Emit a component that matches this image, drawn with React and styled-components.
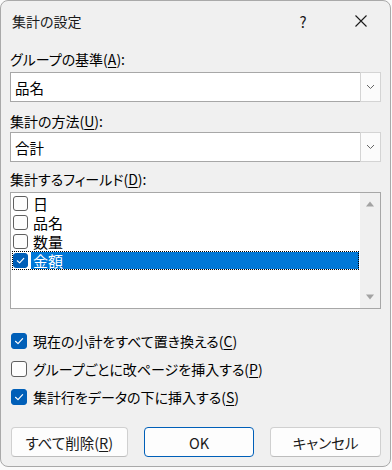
import React from 'react';
import styled, { createGlobalStyle } from 'styled-components';

const GlobalStyle = createGlobalStyle`
  html, body {
    margin: 0;
    padding: 0;
    background: #fafafa;
  }
  body {
    font-family: "Noto Sans CJK JP", "Noto Sans", sans-serif;
    font-feature-settings: "palt";
    color: #000;
  }
`;

const Dialog = styled.div`
  width: 391px;
  height: 467px;
  box-sizing: border-box;
  background: #f0f0f0;
  border: 1px solid #a9a9a9;
  border-radius: 8px;
  display: flex;
  flex-direction: column;
  overflow: hidden;
`;

const TitleBar = styled.div`
  height: 40px;
  display: flex;
  align-items: center;
  padding-left: 11px;
  font-size: 14px;
  color: #1a1a1a;
`;

const Title = styled.div`
  flex: 1;
`;

const TitleButton = styled.div`
  width: 58px;
  height: 40px;
  display: flex;
  align-items: center;
  justify-content: center;
  font-size: 15px;
  color: #1a1a1a;
`;

const Body = styled.div`
  display: flex;
  flex-direction: column;
  padding: 0 9px;
`;

const Label = styled.div`
  height: 20px;
  line-height: 20px;
  font-size: 14px;
  margin-top: ${(p) => p.$top}px;
`;

const Key = styled.span`
  text-decoration: underline;
  text-underline-offset: 2px;
`;

const Select = styled.div`
  margin-top: ${(p) => p.$top}px;
  width: 371px;
  height: 30px;
  box-sizing: border-box;
  background: #fff;
  border: 1px solid #a7a7a7;
  display: flex;
  align-items: center;
`;

const SelectText = styled.div`
  flex: 1;
  padding-left: 4px;
  font-size: 14.5px;
`;

const DropButton = styled.div`
  width: 21px;
  height: 30px;
  box-sizing: border-box;
  margin-right: -1px;
  border: 1px solid #d4d4d4;
  background: #fbfbfb;
  display: flex;
  align-items: center;
  justify-content: center;
`;

const ListBox = styled.div`
  margin-top: 3px;
  width: 371px;
  height: 117px;
  box-sizing: border-box;
  background: #fff;
  border: 1px solid #a7a7a7;
  display: flex;
`;

const Items = styled.div`
  flex: 1;
  padding: 1px 0 0 1px;
  display: flex;
  flex-direction: column;
`;

const Item = styled.div`
  height: 19px;
  width: 347px;
  box-sizing: border-box;
  display: flex;
  align-items: center;
  padding-left: 1px;
  outline: ${(p) => (p.$selected ? '1px dotted #000' : 'none')};
  outline-offset: -1px;
`;

const ItemText = styled.div`
  margin-left: 3px;
  padding-left: 2px;
  flex: ${(p) => (p.$selected ? 1 : 'none')};
  height: 17px;
  line-height: 17px;
  font-size: 15px;
  background: ${(p) => (p.$selected ? '#0078d7' : 'transparent')};
  color: ${(p) => (p.$selected ? '#fff' : '#000')};
`;

const Box = styled.div`
  width: ${(p) => p.$size}px;
  height: ${(p) => p.$size}px;
  box-sizing: border-box;
  border-radius: 3px;
  flex: none;
  display: flex;
  align-items: center;
  justify-content: center;
  background: ${(p) => (p.$checked ? '#005fb8' : '#fdfdfd')};
  border: 1px solid ${(p) => (p.$checked ? '#005fb8' : '#5f5f5f')};
`;

const ScrollBar = styled.div`
  width: 20px;
  background: #f0f0f0;
  display: flex;
  flex-direction: column;
  justify-content: space-between;
  align-items: center;
  padding: 8px 0 8px;
`;

const Options = styled.div`
  margin-top: 18px;
  display: flex;
  flex-direction: column;
`;

const OptionRow = styled.div`
  height: 28px;
  display: flex;
  align-items: center;
  padding-left: 1px;
  gap: 6px;
  font-size: 14px;
`;

const Buttons = styled.div`
  margin-top: 16px;
  display: flex;
  gap: 16px;
  padding-left: 1px;
`;

const Button = styled.div`
  width: ${(p) => p.$w}px;
  height: 30px;
  box-sizing: border-box;
  background: #fdfdfd;
  border: 1px solid ${(p) => (p.$primary ? '#005fb8' : '#d0d0d0')};
  border-bottom-color: ${(p) => (p.$primary ? '#005fb8' : '#bdbdbd')};
  border-radius: 4px;
  display: flex;
  align-items: center;
  justify-content: center;
  font-size: 14.5px;
  color: #1a1a1a;
`;

const Check = ({ size }) => (
  <svg width={size - 4} height={size - 4} viewBox="0 0 12 12">
    <polyline points="2.5,6.3 5,8.6 9.6,3.6" fill="none" stroke="#fff" strokeWidth="1.2" strokeLinecap="round" strokeLinejoin="round" />
  </svg>
);

const CheckBox = ({ checked, size }) => (
  <Box $checked={checked} $size={size}>{checked && <Check size={size} />}</Box>
);

const Chevron = () => (
  <svg width="9" height="6" viewBox="0 0 9 6">
    <polyline points="1,1 4.5,4.5 8,1" fill="none" stroke="#666" strokeWidth="1" />
  </svg>
);

const Arrow = ({ down }) => (
  <svg width="10" height="6" viewBox="0 0 10 6">
    <polygon points={down ? '1,0.5 9,0.5 5,5.5' : '1,5.5 9,5.5 5,0.5'} fill="#a3a3a3" />
  </svg>
);

const fields = [
  { name: '日', checked: false },
  { name: '品名', checked: false },
  { name: '数量', checked: false },
  { name: '金額', checked: true },
];

const options = [
  { pre: '現在の小計をすべて置き換える(', key: 'C', checked: true },
  { pre: 'グループごとに改ページを挿入する(', key: 'P', checked: false },
  { pre: '集計行をデータの下に挿入する(', key: 'S', checked: true },
];

export default function App() {
  return (
    <>
      <GlobalStyle />
      <Dialog>
        <TitleBar>
          <Title>集計の設定</Title>
          <TitleButton>?</TitleButton>
          <TitleButton>
            <svg width="12" height="12" viewBox="0 0 12 12">
              <path d="M0.5 0.5 L11.5 11.5 M11.5 0.5 L0.5 11.5" stroke="#1a1a1a" strokeWidth="1.1" />
            </svg>
          </TitleButton>
        </TitleBar>
        <Body>
          <Label $top={8}>グループの基準(<Key>A</Key>):</Label>
          <Select $top={3}>
            <SelectText>品名</SelectText>
            <DropButton><Chevron /></DropButton>
          </Select>
          <Label $top={9}>集計の方法(<Key>U</Key>):</Label>
          <Select $top={1}>
            <SelectText>合計</SelectText>
            <DropButton><Chevron /></DropButton>
          </Select>
          <Label $top={7}>集計するフィールド(<Key>D</Key>):</Label>
          <ListBox>
            <Items>
              {fields.map((f) => (
                <Item key={f.name} $selected={f.checked}>
                  <CheckBox checked={f.checked} size={15} />
                  <ItemText $selected={f.checked}>{f.name}</ItemText>
                </Item>
              ))}
            </Items>
            <ScrollBar>
              <Arrow />
              <Arrow down />
            </ScrollBar>
          </ListBox>
          <Options>
            {options.map((o) => (
              <OptionRow key={o.key}>
                <CheckBox checked={o.checked} size={16} />
                <span>{o.pre}<Key>{o.key}</Key>)</span>
              </OptionRow>
            ))}
          </Options>
          <Buttons>
            <Button $w={117}>すべて削除(<Key>R</Key>)</Button>
            <Button $w={111} $primary>OK</Button>
            <Button $w={111}>キャンセル</Button>
          </Buttons>
        </Body>
      </Dialog>
    </>
  );
}
